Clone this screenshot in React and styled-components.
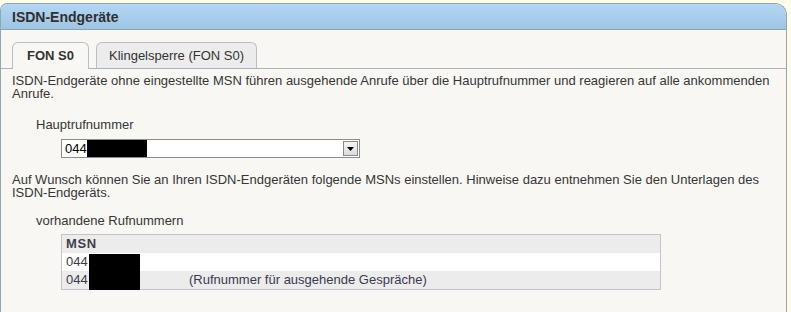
import React from 'react';
import styled, { createGlobalStyle } from 'styled-components';

const GlobalStyle = createGlobalStyle`
  html, body {
    margin: 0;
    padding: 0;
    background: #fdfdea;
  }
  body {
    font-family: "Liberation Sans", Arial, sans-serif;
    font-size: 13px;
    color: #363636;
  }
`;

const Panel = styled.div`
  margin-top: 3px;
  width: 785px;
  height: 309px;
  border: 1px solid #8fa7ae;
  border-bottom: none;
  border-radius: 7px 12px 0 0;
  background: #f8f7f3;
  overflow: hidden;
`;

const PanelHeader = styled.div`
  height: 25px;
  line-height: 26px;
  padding-left: 11px;
  background: linear-gradient(#b4d6f4, #9fc4e4);
  border-bottom: 1px solid #8aa3ac;
  font-size: 14px;
  font-weight: bold;
  color: #2f2f2f;
`;

const TabBar = styled.div`
  display: flex;
  gap: 7px;
  padding: 12px 0 0 11px;
  border-bottom: 1px solid #a9b6bc;
`;

const Tab = styled.div`
  height: ${p => (p.$active ? '26px' : '25px')};
  line-height: 26px;
  padding: 0 ${p => (p.$active ? '14px' : '12px')};
  border: 1px solid #b6c0c4;
  border-bottom: none;
  border-radius: 6px 6px 0 0;
  background: ${p => (p.$active ? '#f8f7f3' : '#ececec')};
  font-weight: ${p => (p.$active ? 'bold' : 'normal')};
  color: #333;
  margin-bottom: ${p => (p.$active ? '-1px' : '0')};
`;

const Content = styled.div`
  padding: 5px 11px 0 11px;
`;

const Para = styled.p`
  margin: 0;
  line-height: 13px;
`;

const Label = styled.div`
  margin: ${p => p.$top}px 0 0 24px;
  line-height: 13px;
`;

const Indent = styled.div`
  margin-left: 49px;
`;

const Select = styled.div`
  margin: 8px 0 15px;
  width: 297px;
  height: 17px;
  border: 1px solid #8c8c8c;
  background: #fff;
  display: flex;
  align-items: center;
  color: #000;
`;

const SelectValue = styled.span`
  padding-left: 3px;
  flex: 1;
  display: flex;
  align-items: center;
`;

const Redacted = styled.span`
  display: inline-block;
  background: #000;
  width: ${p => p.$w}px;
  height: ${p => p.$h}px;
`;

const ArrowButton = styled.span`
  width: 13px;
  height: 13px;
  margin-right: 1px;
  border: 1px solid #8a8a8a;
  background: linear-gradient(#f4f4f4, #dcdcdc);
  display: flex;
  align-items: center;
  justify-content: center;
`;

const Table = styled.div`
  position: relative;
  margin-top: 7px;
  width: 598px;
  border: 1px solid #c4c4c4;
`;

const Row = styled.div`
  height: 18px;
  line-height: 18px;
  padding-left: 4px;
  background: ${p => (p.$shade ? '#ececec' : '#fff')};
  font-weight: ${p => (p.$head ? 'bold' : 'normal')};
  color: ${p => (p.$head ? '#3f3f4a' : '#3a3a4c')};
  letter-spacing: ${p => (p.$head ? '0.6px' : '0')};
  display: flex;
`;

const CellNum = styled.span`
  width: 123px;
`;

const RedactTable = styled.span`
  position: absolute;
  left: 27px;
  top: 19px;
  width: 51px;
  height: 36px;
  background: #000;
`;

export default function App() {
  return (
    <>
      <GlobalStyle />
      <Panel>
        <PanelHeader>ISDN-Endgeräte</PanelHeader>
        <TabBar>
          <Tab $active>FON S0</Tab>
          <Tab>Klingelsperre (FON S0)</Tab>
        </TabBar>
        <Content>
          <Para>
            ISDN-Endgeräte ohne eingestellte MSN führen ausgehende Anrufe über die Hauptrufnummer und reagieren auf alle ankommenden Anrufe.
          </Para>
          <Label $top={18}>Hauptrufnummer</Label>
          <Indent>
            <Select>
              <SelectValue>
                044<Redacted $w={60} $h={17} />
              </SelectValue>
              <ArrowButton>
                <svg width="7" height="4" viewBox="0 0 7 4">
                  <path d="M0 0h7L3.5 4z" fill="#000" />
                </svg>
              </ArrowButton>
            </Select>
          </Indent>
          <Para>
            Auf Wunsch können Sie an Ihren ISDN-Endgeräten folgende MSNs einstellen. Hinweise dazu entnehmen Sie den Unterlagen des ISDN-Endgeräts.
          </Para>
          <Label $top={15}>vorhandene Rufnummern</Label>
          <Indent>
            <Table>
              <Row $shade $head>MSN</Row>
              <Row>
                <CellNum>044</CellNum>
              </Row>
              <Row $shade>
                <CellNum>044</CellNum>
                <span>(Rufnummer für ausgehende Gespräche)</span>
              </Row>
              <RedactTable />
            </Table>
          </Indent>
        </Content>
      </Panel>
    </>
  );
}
